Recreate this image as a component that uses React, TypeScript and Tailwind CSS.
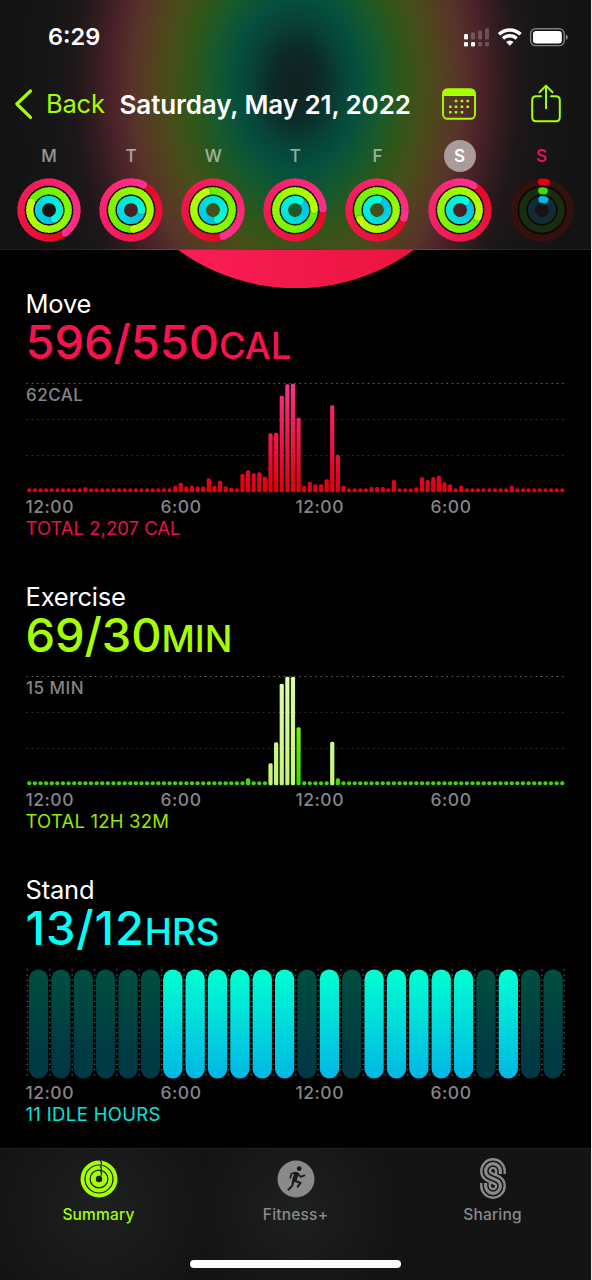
import React from 'react';

type Day = { label: string; heads: number[]; state?: 'selected' | 'today' };

const days: Day[] = [
  { label: 'M', heads: [145, 294, 149] },
  { label: 'T', heads: [27, 173, 93] },
  { label: 'W', heads: [159, 340, 155] },
  { label: 'T', heads: [88, 88, 30] },
  { label: 'F', heads: [107, 242, 8] },
  { label: 'S', heads: [30, 112, 35], state: 'selected' },
  { label: 'S', heads: [6, 5, 6], state: 'today' },
];

const ringRadii = [28, 19.2, 10.5];
const ringColors = [
  { from: [228, 10, 38], to: [255, 48, 140], dim: '#34110f', start: '#e60014' },
  { from: [100, 240, 0], to: [188, 255, 0], dim: '#1a2c10', start: '#3be100' },
  { from: [0, 190, 230], to: [0, 255, 212], dim: '#132b36', start: '#00b9e4' },
];

const BARS = 96;

// bar heights in px, keyed by quarter hour
const moveData: Record<number, number> = {
  10: 5, 26: 6.5, 27: 9.5, 28: 5.7, 29: 6.5, 30: 5.7, 31: 5.7, 32: 14, 33: 6.5, 34: 11.5, 35: 6, 36: 4.5,
  38: 18.3, 39: 22, 40: 19, 41: 20, 42: 15.5, 43: 59, 44: 59.5, 45: 96.5, 46: 108, 47: 108.5, 48: 74.5,
  49: 6.3, 50: 10.5, 51: 8, 52: 8, 53: 13, 54: 87, 55: 37.5, 56: 6.5, 61: 5.3, 62: 5.3, 63: 5.3, 65: 12.3,
  69: 5, 70: 15, 71: 12.3, 72: 15, 73: 16.5, 74: 10, 75: 8, 77: 6.5, 86: 6.5,
};

const exerciseData: Record<number, number> = {
  39: 7, 43: 22, 44: 43, 45: 101.5, 46: 108.5, 47: 108.5, 48: 58, 54: 43.5, 55: 7,
};
const workoutBars = [43, 44, 45, 46, 47, 54];

const standHours = [6, 7, 8, 9, 10, 11, 13, 15, 16, 17, 18, 19, 21];

const point = (r: number, deg: number) => {
  const a = ((deg - 90) * Math.PI) / 180;
  return [32 + r * Math.cos(a), 32 + r * Math.sin(a)];
};

const arc = (r: number, a: number, b: number) => {
  const [x1, y1] = point(r, a);
  const [x2, y2] = point(r, b);
  return `M${x1} ${y1}A${r} ${r} 0 0 1 ${x2} ${y2}`;
};

const DayRings: React.FC<{ day: Day }> = ({ day }) => {
  const steps = 40;
  return (
    <svg width="64" height="64" viewBox="0 0 64 64" fill="none">
      <circle cx="32" cy="32" r="19.2" stroke="#000" strokeOpacity={0.6} strokeWidth="23" />
      {ringRadii.map((r, i) => {
        const c = ringColors[i];
        const head = day.heads[i];
        if (day.state === 'today') {
          return (
            <g key={i}>
              <circle cx="32" cy="32" r={r} stroke={c.dim} strokeWidth="7.2" />
              <path d={arc(r, -1, [9, 7, 16][i])} stroke={c.start} strokeWidth="7" strokeLinecap="round" />
            </g>
          );
        }
        const [hx, hy] = point(r, head);
        const [sx, sy] = point(r, head + 50 / r);
        return (
          <g key={i}>
            {Array.from({ length: steps }, (_, s) => {
              const t = s / (steps - 1);
              const rgb = c.from.map((v, k) => Math.round(v + (c.to[k] - v) * t));
              // arcs overlap slightly so no seam shows between them
              const a = head + (s * 360) / steps;
              const end = Math.min(a + 14, head + 360);
              return <path key={s} d={arc(r, a, end)} stroke={`rgb(${rgb.join(',')})`} strokeWidth="7.1" />;
            })}
            <circle cx={sx} cy={sy} r="3.5" fill="#000" fillOpacity={0.22} />
            <circle cx={hx} cy={hy} r="3.6" fill={`rgb(${c.to.join(',')})`} />
          </g>
        );
      })}
    </svg>
  );
};

const GridLines = () => (
  <g strokeWidth="1.2" strokeDasharray="1.5 3.75">
    <path d="M0.5 3.5H538" stroke="#666668" />
    <path d="M0.5 39.5H538" stroke="#363638" />
    <path d="M0.5 75.5H538" stroke="#363638" />
  </g>
);

const BarChart: React.FC<{ id: string; data: Record<number, number>; top: string; bottom: string; bright?: number[] }> = ({ id, data, top, bottom, bright = [] }) => (
  <svg width="540" height="113" viewBox="0 0 540 113" className="block" fill="none">
    <defs>
      <linearGradient id={id} gradientUnits="userSpaceOnUse" x1="0" y1="4" x2="0" y2="112">
        <stop stopColor={top} />
        <stop offset="0.95" stopColor={bottom} />
      </linearGradient>
      <linearGradient id={`${id}-bright`} gradientUnits="userSpaceOnUse" x1="0" y1="4" x2="0" y2="112">
        <stop stopColor="#dcfbaa" />
        <stop offset="1" stopColor="#c3f578" />
      </linearGradient>
    </defs>
    <GridLines />
    {Array.from({ length: BARS }, (_, i) => {
      const h = data[i] ?? 4;
      return (
        <rect
          key={i}
          x={3.3 + i * 5.61 - 2.1}
          y={112.2 - h}
          width="4.2"
          height={h}
          rx={h > 4 ? 1.5 : 2}
          fill={bright.includes(i) ? `url(#${id}-bright)` : `url(#${id})`}
        />
      );
    })}
  </svg>
);

const StandChart = () => (
  <svg width="540" height="113" viewBox="0 0 540 113" className="block" fill="none">
    <defs>
      <linearGradient id="stood" x1="0" y1="0" x2="0" y2="1">
        <stop stopColor="#00ffd2" />
        <stop offset="1" stopColor="#02b6e4" />
      </linearGradient>
      <linearGradient id="idle" x1="0" y1="0" x2="0" y2="1">
        <stop stopColor="#004f3f" />
        <stop offset="0.75" stopColor="#003b43" />
        <stop offset="1" stopColor="#003845" />
      </linearGradient>
    </defs>
    {Array.from({ length: 25 }, (_, i) => (
      <path key={i} d={`M${1.4 + i * 22.37} 3.3V111`} stroke="#59595b" strokeWidth="1.5" strokeDasharray="1.3 3.95" />
    ))}
    {Array.from({ length: 24 }, (_, i) => (
      <rect key={i} x={2.9 + i * 22.37} y="3.5" width="19.3" height="109" rx="9.65" fill={standHours.includes(i) ? 'url(#stood)' : 'url(#idle)'} />
    ))}
  </svg>
);

interface MetricProps {
  title: string;
  value: string;
  unit: string;
  total: string;
  color: string;
  totalColor: string;
  tracking: string;
  scale?: string;
  children: React.ReactNode;
}

const Metric: React.FC<MetricProps> = ({ title, value, unit, total, color, totalColor, tracking, scale, children }) => (
  <section className="flex h-[293px] flex-col pl-[25.5px]">
    <h2 className="h-[30px] text-[25.5px] leading-[31px] tracking-[-0.2px] text-white">{title}</h2>
    <div className={`flex h-[62px] items-baseline font-medium leading-[47px] ${color}`}>
      <span className={`text-[47px] ${tracking}`}>{value}</span>
      <span className="text-[36.5px]">{unit}</span>
    </div>
    <div className="relative">
      {children}
      {scale && <span className="absolute left-[0.5px] top-[5px] text-[17px] font-medium leading-5 tracking-[0.5px] text-[#858589]">{scale}</span>}
    </div>
    <div className="mt-[4px] grid w-[540px] grid-cols-4 text-[17.5px] font-medium leading-[20px] tracking-[0.5px] text-[#858589]">
      <span>12:00</span>
      <span>6:00</span>
      <span>12:00</span>
      <span>6:00</span>
    </div>
    <div className={`mt-px text-[18.5px] leading-[20px] ${totalColor}`}>{total}</div>
  </section>
);

const StatusIcons = () => (
  <svg width="106" height="22" viewBox="0 0 106 22" fill="none">
    {/* dual sim signal */}
    <g fill="#fff">
      <rect x="1" y="8" width="4" height="5.5" rx="1.2" />
      <rect x="1" y="16" width="4" height="4.5" rx="1.2" />
      <rect x="8" y="16" width="4" height="4.5" rx="1.2" />
      <g opacity="0.22">
        <rect x="8" y="6.5" width="4" height="7" rx="1.2" />
        <rect x="15" y="4.5" width="4" height="9" rx="1.2" />
        <rect x="22" y="2.2" width="4" height="11.3" rx="1.2" />
        <rect x="15" y="16" width="4" height="4.5" rx="1.2" />
        <rect x="22" y="16" width="4" height="4.5" rx="1.2" />
      </g>
    </g>
    <g stroke="#fff" strokeWidth="3.4">
      <path d="M36 8.2a15.8 15.8 0 0 1 21.6 0" />
      <path d="M40 12.5a9.9 9.9 0 0 1 13.6 0" />
    </g>
    <path d="M46.8 19.8l-3.7-3.9a5.3 5.3 0 0 1 7.4 0z" fill="#fff" />
    <rect x="67.6" y="2.8" width="33.6" height="16.8" rx="5" stroke="#fff" strokeOpacity="0.45" strokeWidth="1.4" />
    <rect x="70" y="5" width="28.8" height="12.4" rx="3.2" fill="#fff" />
    <path d="M102.8 8.4q2 .8 2 2.8t-2 2.8z" fill="#fff" fillOpacity="0.5" />
  </svg>
);

const CalendarIcon = () => (
  <svg width="34" height="32" viewBox="0 0 34 32" fill="none">
    <rect x="1" y="1.2" width="32" height="29.6" rx="4.5" stroke="#a6ff00" strokeWidth="1.9" />
    <path d="M1 8V5.5Q1 1 5.5 1h23Q33 1 33 5.5V8z" fill="#a6ff00" />
    {[[14, 13], [20, 13], [25.7, 13], [8.3, 18.8], [14, 18.8], [20, 18.8], [25.7, 18.8], [8.3, 24.2], [14, 24.2], [20, 24.2]].map(([x, y]) => (
      <rect key={`${x}-${y}`} x={x - 1.3} y={y - 1.3} width="2.6" height="2.6" rx="0.7" fill="#a6ff00" />
    ))}
  </svg>
);

const ShareIcon = () => (
  <svg width="32" height="40" viewBox="0 0 32 40" fill="none" stroke="#a6ff00" strokeWidth="2" strokeLinecap="round" strokeLinejoin="round">
    <path d="M11 12.3H6.2q-4 0-4 4v17q0 4 4 4h19.6q4 0 4-4v-17q0-4-4-4H21" />
    <path d="M16 24.3V1.7M9.5 8.2 16 1.6l6.5 6.6" />
  </svg>
);

const SummaryIcon = () => (
  <svg width="42" height="42" viewBox="0 0 42 42" fill="none">
    <circle cx="21" cy="21" r="18.5" fill="#a6ff00" />
    <g stroke="#1b1c1c" strokeWidth="1.2">
      <circle cx="21" cy="21" r="14" />
      <circle cx="21" cy="21" r="8.9" />
      <path d="M22 2.5q2.6 2 .8 4.6M22 8q2.6 2 .8 4.4M22.2 13q2.4 2 .6 5" />
    </g>
    <circle cx="21" cy="21" r="3.2" fill="#1b1c1c" />
  </svg>
);

const FitnessIcon = () => (
  <svg width="42" height="42" viewBox="0 0 42 42" fill="none">
    <circle cx="21" cy="21" r="18.5" fill="#8a8a8a" />
    <circle cx="24.2" cy="10.7" r="2.4" fill="#191a1a" />
    <g stroke="#191a1a" strokeLinecap="round" strokeLinejoin="round">
      <path d="M21.3 16.2 19.4 22" strokeWidth="4.4" />
      <path d="M20.5 14.6 16.4 15.8 15.3 19.8M23 15.5 25.6 18.9 29.5 17.4" strokeWidth="1.7" />
      <path d="M20.4 23 25.6 24.9 22.7 28.7M18.3 22.8 17.3 27.6 13.5 31.6" strokeWidth="2.1" />
    </g>
  </svg>
);

const SharingIcon = () => {
  const d = 'M20.4 17V14a7.4 7.4 0 0 0-14.8 0C5.6 18.8 9 19.8 13 21.5S20.4 24.2 20.4 29a7.4 7.4 0 0 1-14.8 0V26';
  return (
    <svg width="26" height="43" viewBox="0 0 26 43" fill="none">
      <path d={d} stroke="#8a8a8a" strokeWidth="11" />
      <path d={d} stroke="#151515" strokeWidth="6.2" />
      <path d={d} stroke="#8a8a8a" strokeWidth="3.2" />
    </svg>
  );
};

const tabs = [
  { label: 'Summary', icon: <SummaryIcon />, color: 'text-[#a6ff00]' },
  { label: 'Fitness+', icon: <FitnessIcon />, color: 'text-[#8a8a8a]' },
  { label: 'Sharing', icon: <SharingIcon />, color: 'text-[#8a8a8a]' },
];

const dayLabelClass = (day: Day) => {
  if (day.state === 'selected') return 'bg-[#aa9c9c] text-white font-semibold';
  if (day.state === 'today') return 'text-[#fa1150] font-medium';
  return 'text-white/55 font-medium';
};

const App: React.FC = () => {
  return (
    <div className="h-[1280px] w-[592px] overflow-hidden bg-[#ececec] font-['Inter','Liberation_Sans',sans-serif]">
      <div className="flex h-full w-[591px] flex-col bg-black">
        <header className="h-[249.5px] shrink-0 border-b border-white/5 bg-[radial-gradient(ellipse_300px_420px_at_297px_83px,#10201f_0px,#0d2a29_24px,#074438_47px,#05503e_62px,#185a2c_86px,#305618_107px,#454f1a_126px,#53411f_145px,#58342a_163px,#4c2329_184px,#2f1b1f_206px,#1e1719_223px,#161617_247px,#131313_290px)]">
          <div className="flex h-[73px] items-center justify-between pl-[48px] pr-[22px]">
            <span className="text-[23.5px] font-semibold leading-none text-white">6:29</span>
            <StatusIcons />
          </div>
          <nav className="flex h-[62px] items-center pl-[14px] text-[25.5px]">
            <svg width="19" height="32" viewBox="0 0 19 32" fill="none">
              <path d="M16.5 3 2.8 16 16.5 29.3" stroke="#a6ff00" strokeWidth="3.2" strokeLinecap="round" strokeLinejoin="round" />
            </svg>
            <span className="ml-[13px] w-[73.5px] tracking-[-0.2px] text-[#a6ff00]">Back</span>
            <h1 className="w-[322.5px] whitespace-nowrap text-[26px] font-semibold tracking-[-0.1px] text-white">Saturday, May 21, 2022</h1>
            <CalendarIcon />
            <span className="ml-[54px]">
              <ShareIcon />
            </span>
          </nav>
          <div className="flex pl-[8px] pt-[5px]">
            {days.map((day, i) => (
              <div key={i} className="flex w-[82.1px] flex-col items-center">
                <span className={`flex h-[32px] w-[32px] items-center justify-center rounded-full text-[17px] leading-none ${dayLabelClass(day)}`}>{day.label}</span>
                <div className="mt-[5.5px]">
                  <DayRings day={day} />
                </div>
              </div>
            ))}
          </div>
        </header>

        <main className="h-[898.5px] shrink-0 overflow-hidden">
          {/* bottom edge of the large activity ring */}
          <svg width="591" height="38.5" viewBox="0 249.5 591 38.5" className="block">
            <defs>
              <linearGradient id="ring" gradientUnits="userSpaceOnUse" x1="180" y1="0" x2="412" y2="0">
                <stop stopColor="#f91e56" />
                <stop offset="1" stopColor="#ec1440" />
              </linearGradient>
            </defs>
            <circle cx="296" cy="88" r="199.8" fill="url(#ring)" />
          </svg>
          <Metric title="Move" value="596/550" unit="CAL" total="TOTAL 2,207 CAL" color="text-[#fa1150]" totalColor="text-[#e4114b]" tracking="tracking-[-0.1px]" scale="62CAL">
            <BarChart id="move" data={moveData} top="#ff2f8c" bottom="#e20012" />
          </Metric>
          <Metric title="Exercise" value="69/30" unit="MIN" total="TOTAL 12H 32M" color="text-[#a6ff00]" totalColor="text-[#97e800] tracking-[0.2px]" tracking="tracking-[-0.1px]" scale="15 MIN">
            <BarChart id="exercise" data={exerciseData} top="#b8ff00" bottom="#3adb00" bright={workoutBars} />
          </Metric>
          <Metric title="Stand" value="13/12" unit="HRS" total="11 IDLE HOURS" color="text-[#00fff6]" totalColor="text-[#00e6de] tracking-[0.35px]" tracking="tracking-[0.9px]">
            <StandChart />
          </Metric>
        </main>

        <footer className="flex h-[132px] shrink-0 flex-col items-center border-t border-white/5 bg-[#141414] bg-[radial-gradient(circle_at_100px_60px,#1e1f1f_0px,transparent_110px),radial-gradient(circle_at_297px_60px,#1e1f1f_0px,transparent_100px)]">
          <div className="grid w-full grid-cols-3">
            {tabs.map(tab => (
              <div key={tab.label} className={`flex flex-col items-center ${tab.color}`}>
                <div className="mt-[8px] flex h-[43px] items-center">{tab.icon}</div>
                <span className="mt-[5px] text-[15.5px] font-medium leading-[20px] tracking-[0.2px]">{tab.label}</span>
              </div>
            ))}
          </div>
          <div className="mt-[35px] h-[7.5px] w-[211px] rounded-full bg-white" />
        </footer>
      </div>
    </div>
  );
};

export default App;
